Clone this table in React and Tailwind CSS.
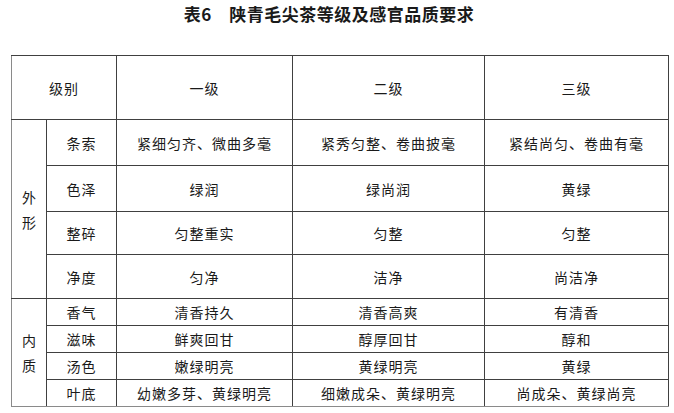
const rows = [
  { label: '条索', cells: ['紧细匀齐、微曲多毫', '紧秀匀整、卷曲披毫', '紧结尚匀、卷曲有毫'], h: 'h-[46px]' },
  { label: '色泽', cells: ['绿润', '绿尚润', '黄绿'], h: 'h-[46px]' },
  { label: '整碎', cells: ['匀整重实', '匀整', '匀整'], h: 'h-[43px]', light: true },
  { label: '净度', cells: ['匀净', '洁净', '尚洁净'], h: 'h-[44px]' },
];

const inner = [
  { label: '香气', cells: ['清香持久', '清香高爽', '有清香'] },
  { label: '滋味', cells: ['鲜爽回甘', '醇厚回甘', '醇和'] },
  { label: '汤色', cells: ['嫩绿明亮', '黄绿明亮', '黄绿'] },
  { label: '叶底', cells: ['幼嫩多芽、黄绿明亮', '细嫩成朵、黄绿明亮', '尚成朵、黄绿尚亮'] },
];

const cell = 'border border-[#404040] text-center align-middle p-0';

export default function App() {
  return (
    <div
      className="w-[674px] h-[413px] bg-white text-[#1a1a1a]"
      style={{ fontFamily: '"Noto Sans CJK SC", "Noto Sans", sans-serif' }}
    >
      <div className="flex justify-center pt-[3px] pr-[16px] h-[55px]">
        <h1 className="text-[17px] leading-[22px] font-bold tracking-[0.5px]">表6　陕青毛尖茶等级及感官品质要求</h1>
      </div>
      <table className="ml-[11px] table-fixed border-collapse text-[14px] leading-[18px] tracking-[1px]">
        <colgroup>
          <col className="w-[35px]" />
          <col className="w-[70px]" />
          <col className="w-[176px]" />
          <col className="w-[192px]" />
          <col className="w-[184px]" />
        </colgroup>
        <tbody>
          <tr className="h-[64px]">
            <td colSpan={2} className={cell + ' border-l-[#8a8a8a]'}>级别</td>
            <td className={cell}>一级</td>
            <td className={cell}>二级</td>
            <td className={cell}>三级</td>
          </tr>
          {rows.map((r, i) => (
            <tr key={r.label} className={r.h}>
              {i === 0 && (
                <td rowSpan={4} className={cell + ' border-l-[#8a8a8a]'}>
                  <div className="flex flex-col items-center gap-[7px] pl-[1px]">
                    <span>外</span>
                    <span>形</span>
                  </div>
                </td>
              )}
              <td className={cell + (r.light ? ' border-t-[#9a9a9a]' : '')}>{r.label}</td>
              {r.cells.map((c, j) => (
                <td key={j} className={cell + (r.light ? ' border-t-[#9a9a9a]' : '')}>{c}</td>
              ))}
            </tr>
          ))}
          {inner.map((r, i) => (
            <tr key={r.label} className="h-[27px]">
              {i === 0 && (
                <td rowSpan={4} className={cell + ' border-l-[#8a8a8a] border-b-[#8a8a8a]'}>
                  <div className="flex flex-col items-center gap-[7px] pl-[1px]">
                    <span>内</span>
                    <span>质</span>
                  </div>
                </td>
              )}
              <td className={cell + (i === 3 ? ' border-b-[#8a8a8a]' : '')}>{r.label}</td>
              {r.cells.map((c, j) => (
                <td
                  key={j}
                  className={
                    cell +
                    (i === 3 ? ' border-b-[#8a8a8a]' : '') +
                    (j === 1 ? ' border-l-[#7a7a7a]' : '')
                  }
                >
                  {c}
                </td>
              ))}
            </tr>
          ))}
        </tbody>
      </table>
    </div>
  );
}
